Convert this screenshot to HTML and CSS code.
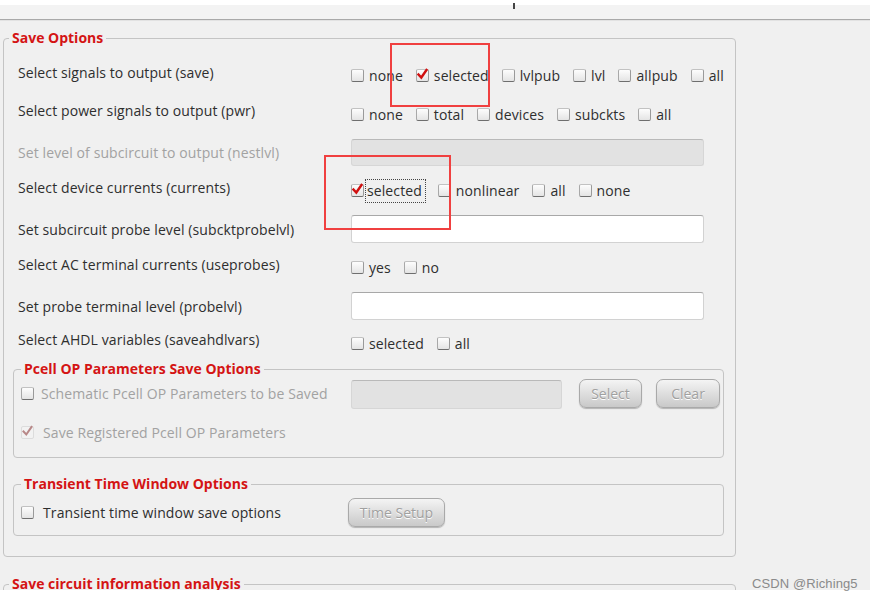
FILE: index.html
```html
<!DOCTYPE html>
<html>
<head>
<meta charset="utf-8">
<link rel="stylesheet" href="styles.css">
</head>
<body>
<div class="page">
  <div class="topwhite"><span class="caret"></span></div>
  <div class="toolbar"></div>
  <div class="main">
    <fieldset class="group outer">
      <legend>Save Options</legend>
      <div class="row h39 cbrow">
        <span class="lbl">Select signals to output (save)</span>
        <div class="ctl">
          <label class="opt"><span class="cb"></span>none</label>
          <label class="opt"><span class="cb on"><svg viewBox="0 0 13 13"><path d="M2.5 6.5 L5.3 9.5 L10.5 2"/></svg></span>selected</label>
          <label class="opt"><span class="cb"></span>lvlpub</label>
          <label class="opt"><span class="cb"></span>lvl</label>
          <label class="opt"><span class="cb"></span>allpub</label>
          <label class="opt"><span class="cb"></span>all</label>
        </div>
      </div>
      <div class="row h38 cbrow">
        <span class="lbl">Select power signals to output (pwr)</span>
        <div class="ctl">
          <label class="opt"><span class="cb"></span>none</label>
          <label class="opt"><span class="cb"></span>total</label>
          <label class="opt"><span class="cb"></span>devices</label>
          <label class="opt"><span class="cb"></span>subckts</label>
          <label class="opt"><span class="cb"></span>all</label>
        </div>
      </div>
      <div class="row h38">
        <span class="lbl dis">Set level of subcircuit to output (nestlvl)</span>
        <div class="ctl"><span class="field disabled short"></span></div>
      </div>
      <div class="row h39 cbrow">
        <span class="lbl">Select device currents (currents)</span>
        <div class="ctl">
          <label class="opt"><span class="cb on"><svg viewBox="0 0 13 13"><path d="M2.5 6.5 L5.3 9.5 L10.5 2"/></svg></span><span class="focus">selected</span></label>
          <label class="opt"><span class="cb"></span>nonlinear</label>
          <label class="opt"><span class="cb"></span>all</label>
          <label class="opt"><span class="cb"></span>none</label>
        </div>
      </div>
      <div class="row h38">
        <span class="lbl">Set subcircuit probe level (subcktprobelvl)</span>
        <div class="ctl"><span class="field"></span></div>
      </div>
      <div class="row h39 cbrow">
        <span class="lbl">Select AC terminal currents (useprobes)</span>
        <div class="ctl">
          <label class="opt"><span class="cb"></span>yes</label>
          <label class="opt"><span class="cb"></span>no</label>
        </div>
      </div>
      <div class="row h38">
        <span class="lbl">Set probe terminal level (probelvl)</span>
        <div class="ctl"><span class="field"></span></div>
      </div>
      <div class="row h36 cbrow">
        <span class="lbl">Select AHDL variables (saveahdlvars)</span>
        <div class="ctl">
          <label class="opt"><span class="cb"></span>selected</label>
          <label class="opt"><span class="cb"></span>all</label>
        </div>
      </div>

      <fieldset class="group inner pcell">
        <legend>Pcell OP Parameters Save Options</legend>
        <div class="irow">
          <label class="iopt dis"><span class="cb"></span>Schematic Pcell OP Parameters to be Saved</label>
          <div class="ctl">
            <span class="field disabled pf"></span>
            <span class="btn w63">Select</span>
            <span class="btn w64">Clear</span>
          </div>
        </div>
        <div class="irow second">
          <label class="iopt dis"><span class="cb on dimcheck"><svg viewBox="0 0 13 13"><path d="M2.5 6.5 L5.3 9.5 L10.5 2"/></svg></span>Save Registered Pcell OP Parameters</label>
        </div>
      </fieldset>

      <fieldset class="group inner trans">
        <legend>Transient Time Window Options</legend>
        <div class="irow trow">
          <label class="iopt"><span class="cb"></span>Transient time window save options</label>
          <div class="ctl ctl2"><span class="btn w97">Time Setup</span></div>
        </div>
      </fieldset>
    </fieldset>

    <fieldset class="group outer next">
      <legend>Save circuit information analysis</legend>
    </fieldset>
  </div>
  <div class="footwhite"></div>

  <span class="mark m1"></span>
  <span class="mark m2"></span>
  <span class="watermark">CSDN @Riching5</span>
</div>
</body>
</html>
```
FILE: styles.css
```css
* { box-sizing: border-box; }
html, body { margin: 0; padding: 0; }
body {
  width: 870px;
  height: 600px;
  overflow: hidden;
  background: #f0f0f0;
  font-family: "Open Sans", "Noto Sans", sans-serif;
  font-size: 14px;
  letter-spacing: 0.1px;
  color: #2e2e2e;
}
.page { position: relative; width: 870px; height: 600px; overflow: hidden; }
.topwhite { height: 5px; background: #fff; position: relative; }
.caret { position: absolute; left: 513px; top: 3px; width: 2px; height: 6px; background: #444; }
.toolbar {
  height: 15px;
  background: #f3f3f3;
  border-bottom: 1px solid #a9a9a9;
  box-shadow: 0 1px 0 #e2e2e2;
}
.main { height: 570px; overflow: hidden; padding-left: 3px; padding-top: 10px; }

.group {
  margin: 0;
  border: 1px solid #c4c4c4;
  border-radius: 4px;
  min-width: 0;
}
.group legend {
  font-weight: 700;
  color: #d41414;
  line-height: 16px;
  padding: 0 3px;
  margin-left: 5px;
  letter-spacing: 0;
}
.outer { width: 733px; padding: 10px 0 20px 14px; }
.outer > legend { margin-left: -9px; }
.outer.next { margin-top: 19px; height: 60px; padding: 0; }
.outer.next > legend { margin-left: 5px; }

.row {
  display: grid;
  grid-template-columns: 333px 1fr;
  align-items: center;
}
.h39 { height: 39px; }
.h38 { height: 38px; }
.h36 { height: 36px; }
.lbl { white-space: nowrap; }
.cbrow .lbl { margin-bottom: 7px; }
.dis { color: #a2a2a2; }

.ctl { display: flex; align-items: center; }
.opt { display: inline-flex; align-items: center; margin-right: 13px; white-space: nowrap; }
.cb {
  width: 13px; height: 13px;
  border: 1px solid #c2c2c2;
  border-bottom-color: #6e6e6e;
  border-right-color: #9a9a9a;
  border-left-color: #a8a8a8;
  border-radius: 2px;
  background: linear-gradient(#fdfdfd, #e4e4e4);
  margin-right: 5px;
  position: relative;
  flex: none;
}
.cb svg { position: absolute; left: -1px; top: -2px; width: 13px; height: 13px; overflow: visible; }
.cb svg path { fill: none; stroke: #d01010; stroke-width: 2.4; stroke-linecap: square; stroke-linejoin: miter; }
.dimcheck { border-color: #dcdcdc; background: #f2f2f2; }
.dimcheck svg path { stroke: #b88888; stroke-width: 2; }
.focus { outline: 1px dotted #444; outline-offset: 0; padding: 1px 3px 2px 1px; margin-left: -3px; }

.field {
  display: block;
  width: 353px; height: 28px;
  background: #fff;
  border: 1px solid #d2d2d2;
  border-top-color: #a8a8a8;
  border-radius: 3px;
}
.field.short { height: 27px; }
.field.disabled { background: #e2e2e2; border-color: #d6d6d6; border-top-color: #b9b9b9; }
.field.pf { width: 211px; height: 29px; margin-top: 2px; margin-right: 17px; }

.inner { width: 711px; margin-left: -5px; padding: 0 0 0 7px; }
.inner legend { margin-left: 0; }
.pcell { margin-top: 0; padding-bottom: 9px; }
.trans { margin-top: 18px; padding-top: 5px; padding-bottom: 7px; }

.irow { display: grid; grid-template-columns: 330px 1fr; align-items: center; height: 32px; }
.irow.second { margin-top: 7px; }
.irow.trow { height: 31px; grid-template-columns: 327px 1fr; }
.iopt { display: inline-flex; align-items: center; white-space: nowrap; }
.iopt .cb { margin-right: 7px; }
.trow .iopt .cb, .second .iopt .cb { margin-right: 9px; }

.btn {
  display: inline-flex; align-items: center; justify-content: center;
  height: 29px;
  border: 1px solid #a9a9a9;
  border-radius: 7px;
  background: linear-gradient(#f4f4f4, #dcdcdc 55%, #c9c9c9);
  color: #a0a0a0;
  text-shadow: 0 1px 0 #fff;
  box-shadow: 0 1px 1px rgba(0,0,0,0.25);
  font-size: 14px;
  letter-spacing: 0;
}
.w63 { width: 63px; margin-right: 14px; }
.w64 { width: 64px; }
.w97 { width: 97px; }

.footwhite { height: 10px; background: #fff; }

.mark { position: absolute; border: 2px solid #f04040; }
.m1 { left: 390px; top: 43px; width: 100px; height: 64px; }
.m2 { left: 324px; top: 155px; width: 127px; height: 75px; }
.watermark {
  position: absolute; left: 752px; top: 576px;
  font-family: "Liberation Sans", Arial, sans-serif;
  font-size: 13px; color: #8a8a8a;
}
```
